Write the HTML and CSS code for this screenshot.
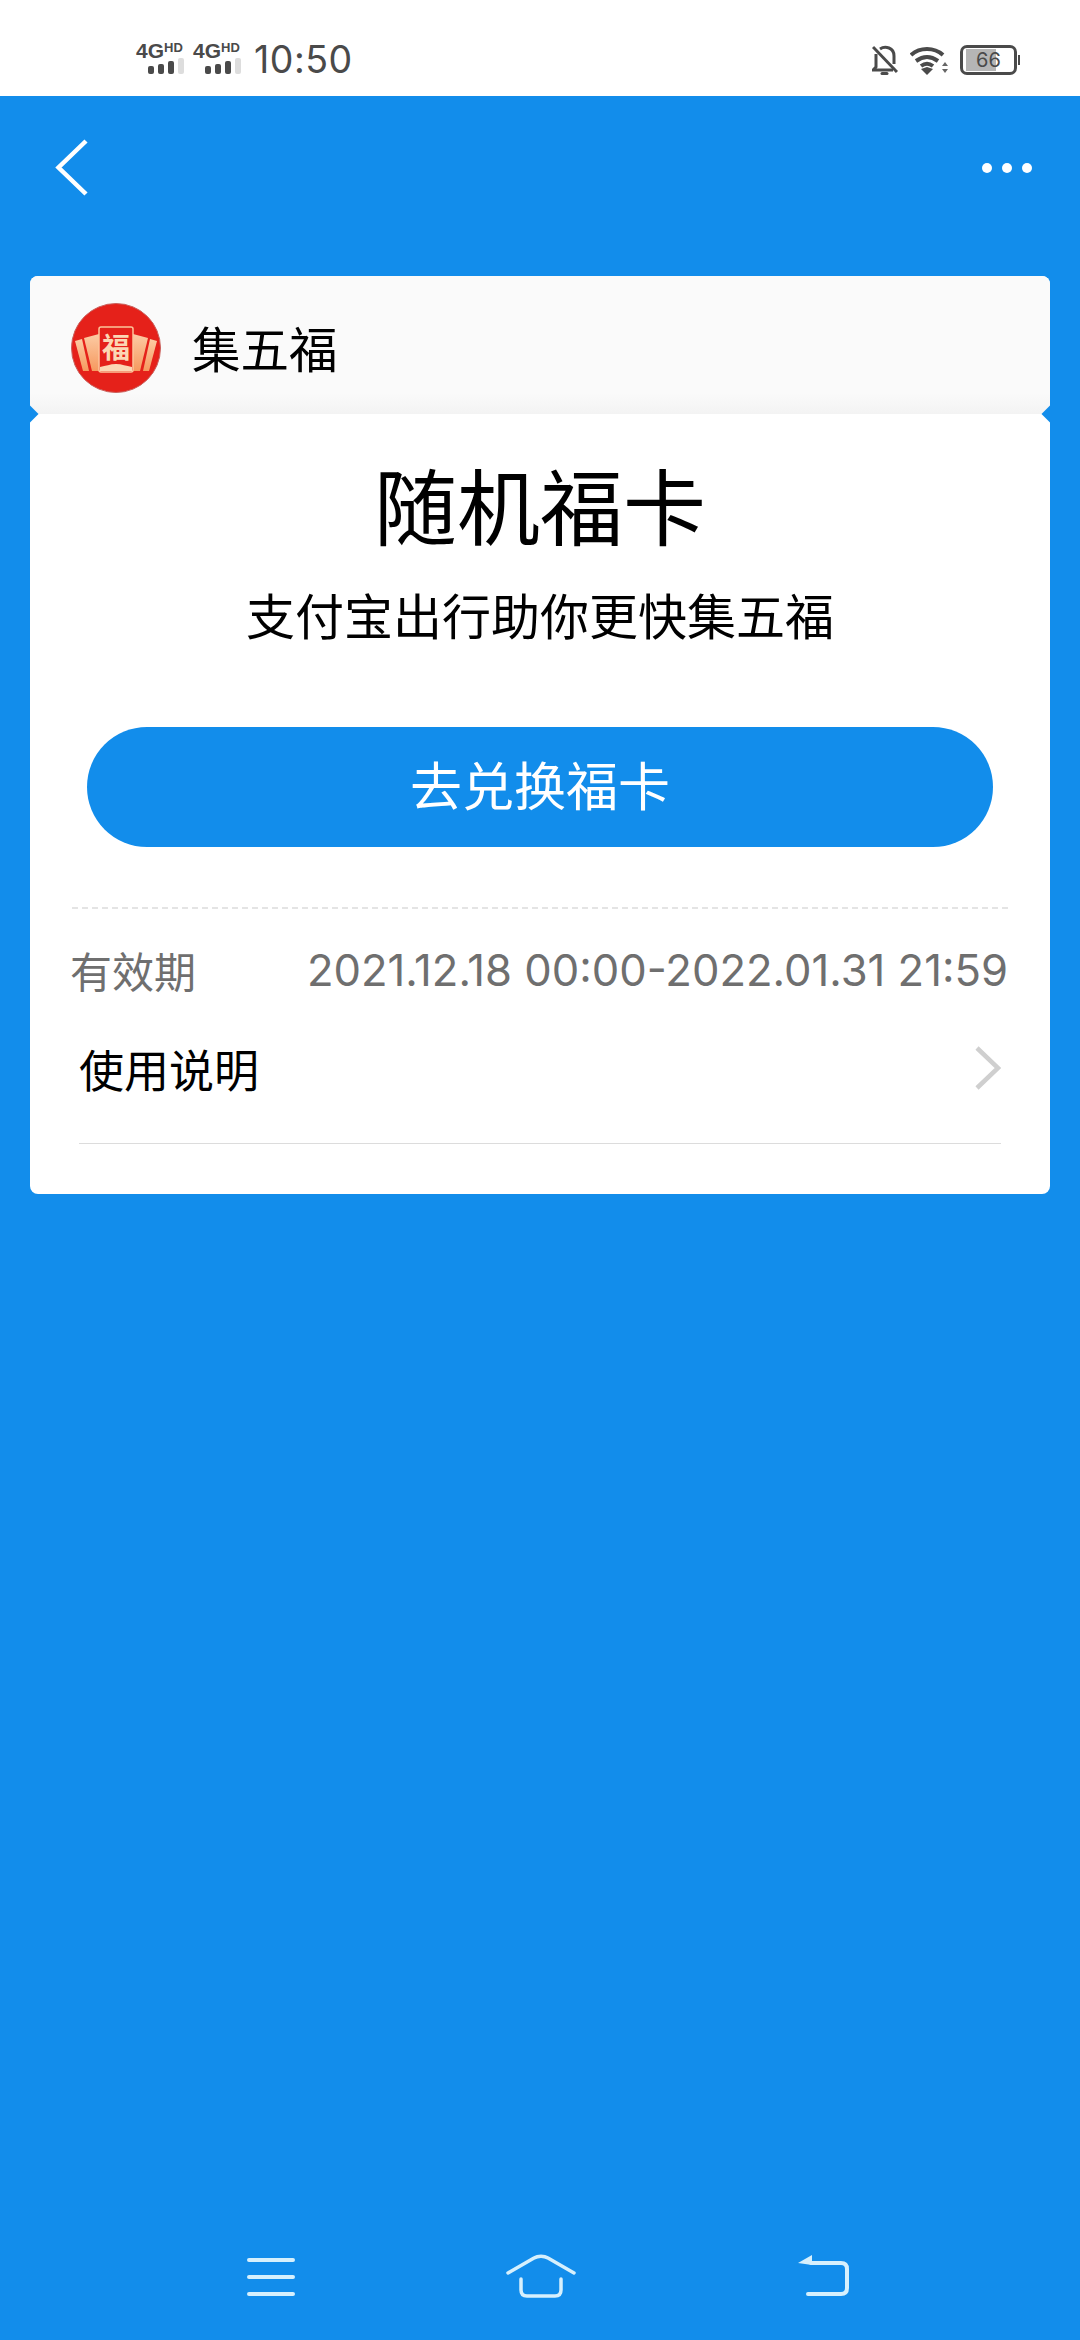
FILE: index.html
```html
<!DOCTYPE html>
<html lang="zh-CN">
<head>
    <meta charset="UTF-8">
    <meta name="viewport" content="width=device-width, initial-scale=1.0">
    <title>随机福卡</title>
    <link rel="stylesheet" href="styles.css">
</head>
<body>
    <div class="status-bar">
        <div class="status-left">
            <div class="signal">
                <div class="signal-label"><span class="net">4G</span><span class="hd">HD</span></div>
                <div class="bars"><i></i><i></i><i></i><i class="off"></i></div>
            </div>
            <div class="signal">
                <div class="signal-label"><span class="net">4G</span><span class="hd">HD</span></div>
                <div class="bars"><i></i><i></i><i></i><i class="off"></i></div>
            </div>
            <span class="clock">10:50</span>
        </div>
        <div class="status-right">
            <svg class="bell" width="26" height="30" viewBox="0 0 26 30" fill="none" stroke="#4a4a4a" stroke-width="3">
                <path d="M4 9v13l-3 3h20"/>
                <path d="M8 4c3-2 6-2 9-1 4 1.500 5 5 5 8v8"/>
                <path d="M1 2l24 25"/>
                <path d="M10 28.500h5" stroke-linecap="round"/>
            </svg>
            <svg class="wifi" width="39" height="29" viewBox="0 0 39 29" fill="none" stroke="#4a4a4a" stroke-width="4">
                <path d="M1 9c9-8 23-8 32 0"/>
                <path d="M6 15c7-5 15-5 22 0"/>
                <path d="M11 20c4-3 8-3 12 0"/>
                <path d="M11 23l6 6 6-6-6-2z" fill="#4a4a4a" stroke="none"/>
                <path d="M32 20l3-4 3 4z M32 23l3 4 3-4z" fill="#666" stroke="none"/>
            </svg>
            <div class="battery">
                <div class="battery-body">
                    <div class="battery-level"></div>
                    <span class="battery-num">66</span>
                </div>
                <div class="battery-tip"></div>
            </div>
        </div>
    </div>

    <div class="page">
        <div class="top-bar">
            <svg width="36" height="60" viewBox="0 0 36 60" fill="none" stroke="#fff" stroke-width="4.500">
                <path d="M34 3L6.500 29.500 34 56"/>
            </svg>
            <div class="more"><i></i><i></i><i></i></div>
        </div>

        <div class="card">
            <div class="card-head">
                <svg class="logo" width="92" height="92" viewBox="0 0 92 92">
                    <defs>
                        <linearGradient id="cardFill" x1="0" y1="0" x2="0" y2="1">
                            <stop offset="0" stop-color="#fccba4"/>
                            <stop offset="1" stop-color="#f6995f"/>
                        </linearGradient>
                    </defs>
                    <circle cx="45" cy="46" r="44.500" fill="#e5211a" stroke="#c9625e" stroke-width="1"/>
                    <path d="M4 39l7-2 7 32h-6z" fill="url(#cardFill)"/>
                    <path d="M13 36l15-4v37h-7z" fill="url(#cardFill)"/>
                    <path d="M86 39l-7-2-7 32h6z" fill="url(#cardFill)"/>
                    <path d="M77 36l-15-4v37h7z" fill="url(#cardFill)"/>
                    <rect x="28" y="25" width="34" height="45" rx="2" fill="#e5211a" stroke="#fcc59a" stroke-width="1.500"/>
                    <path d="M29 69v-4c6-1 10-3 16-3s10 2 16 3v4z" fill="#fcd7b4"/>
                    <text class="logo-char" x="45" y="56" text-anchor="middle">福</text>
                </svg>
                <span class="card-name">集五福</span>
            </div>
            <div class="card-body">
                <i class="notch notch-left"></i>
                <i class="notch notch-right"></i>
                <h1 class="title">随机福卡</h1>
                <p class="subtitle">支付宝出行助你更快集五福</p>
                <div class="btn">去兑换福卡</div>
                <div class="dashed"></div>
                <div class="validity">
                    <span class="validity-label">有效期</span>
                    <span class="validity-date">2021.12.18 00:00-2022.01.31 21:59</span>
                </div>
                <div class="usage">
                    <span>使用说明</span>
                    <svg width="26" height="44" viewBox="0 0 26 44" fill="none" stroke="#cfcfcf" stroke-width="4.500">
                        <path d="M2 2l21 20L2 42"/>
                    </svg>
                </div>
            </div>
        </div>

        <div class="nav-bar">
            <svg class="nav-menu" width="50" height="38" viewBox="0 0 50 38" fill="none" stroke="#d6f0fd" stroke-width="4" stroke-linecap="round">
                <path d="M3 2h44M3 19h44M3 36h44"/>
            </svg>
            <svg class="nav-home" width="72" height="46" viewBox="0 0 72 46" fill="none" stroke="#d6f0fd" stroke-width="3.500" stroke-linecap="round" stroke-linejoin="round">
                <path d="M3 19L29 4c4-2.500 10-2.500 14 0l26 15"/>
                <path d="M16 25v11c0 4 2 6 6 6h28c4 0 6-2 6-6V25"/>
            </svg>
            <svg class="nav-back" width="54" height="44" viewBox="0 0 54 44" fill="none" stroke="#d6f0fd" stroke-width="4" stroke-linecap="round">
                <path d="M11 40h33c4 0 6-2 6-6V15c0-4-2-6-6-6H14"/>
                <path d="M15 1v10L1 9z" fill="#d6f0fd" stroke="none"/>
            </svg>
        </div>
    </div>
</body>
</html>
```

FILE: styles.css
```css
* {
    box-sizing: border-box;
}
html, body {
    margin: 0;
    padding: 0;
}
body {
    width: 1080px;
    height: 2340px;
    font-family: "Inter", "Noto Sans CJK SC", sans-serif;
    background-color: #128deb;
    display: flex;
    flex-direction: column;
    overflow: hidden;
}

/* status bar */
.status-bar {
    height: 96px;
    background-color: #fff;
    display: flex;
    justify-content: space-between;
    align-items: center;
    padding: 20px 60px 0 136px;
    color: #4a4a4a;
}
.status-left, .status-right {
    display: flex;
    align-items: center;
}
.status-right {
    margin-top: 4px;
}
.signal {
    width: 57px;
}
.signal-label {
    display: flex;
    align-items: flex-start;
    height: 16px;
    font-family: "Liberation Sans", sans-serif;
    font-weight: 700;
    line-height: 17px;
}
.net {
    font-size: 21px;
}
.hd {
    font-size: 13px;
    line-height: 11px;
}
.bars {
    display: flex;
    gap: 4px;
    align-items: flex-end;
    height: 16px;
    padding-left: 12px;
}
.bars i {
    display: block;
    width: 6px;
    height: 8px;
    background-color: #4a4a4a;
    border-radius: 2px;
}
.bars i:nth-child(2) { height: 10px; }
.bars i:nth-child(3) { height: 13px; }
.bars i.off {
    height: 16px;
    background-color: #ddd;
}
.clock {
    font-size: 37.500px;
    margin-left: 4px;
    margin-top: 3px;
    letter-spacing: 0.5px;
}
.bell {
    margin-right: 12px;
}
.wifi {
    margin-right: 11px;
}
.battery {
    display: flex;
    align-items: center;
}
.battery-body {
    position: relative;
    width: 57px;
    height: 30px;
    border: 3px solid #4a4a4a;
    border-radius: 7px;
    padding: 1px 3px;
}
.battery-level {
    width: 30px;
    height: 100%;
    background-color: #b5b5b5;
}
.battery-num {
    position: absolute;
    left: 13px;
    top: 0;
    font-size: 20px;
    line-height: 24px;
}
.battery-tip {
    width: 2px;
    height: 10px;
    margin-left: 1px;
    background-color: #4a4a4a;
}

/* main */
.page {
    flex: 1;
    display: flex;
    flex-direction: column;
}
.top-bar {
    height: 180px;
    padding: 42px 48px 0 52px;
    display: flex;
    justify-content: space-between;
}
.more {
    display: flex;
    gap: 10px;
    padding-top: 25px;
}
.more i {
    display: block;
    width: 10px;
    height: 10px;
    border-radius: 50%;
    background-color: #fff;
}
.card {
    margin: 0 30px;
    height: 918px;
    background-color: #fff;
    border-radius: 8px;
    overflow: hidden;
}
.card-head {
    height: 138px;
    background: linear-gradient(#fafafa 85%, #f3f3f3);
    display: flex;
    align-items: center;
    padding: 6px 0 0 41px;
}
.logo {
    margin-right: 29px;
}
.logo-char {
    font-family: "Noto Sans CJK SC", sans-serif;
    font-size: 28px;
    font-weight: 700;
    fill: #fcd7b4;
}
.card-name {
    font-size: 48.500px;
    margin-top: -3px;
    color: #000;
}
.card-body {
    position: relative;
    display: flex;
    flex-direction: column;
    align-items: center;
    height: 780px;
}
.notch {
    position: absolute;
    top: -6px;
    width: 12px;
    height: 12px;
    background-color: #128deb;
    transform: rotate(45deg);
}
.notch-left { left: -6px; }
.notch-right { right: -6px; }
.title {
    margin: 36px 0 0 0;
    font-size: 83px;
    line-height: 118px;
    font-weight: 400;
    color: #000;
}
.subtitle {
    margin: 15px 0 0 0;
    font-size: 49px;
    line-height: 70px;
    color: #000;
}
.btn {
    width: 906px;
    height: 120px;
    margin-top: 74px;
    background-color: #128deb;
    border-radius: 60px;
    color: #fff;
    font-size: 52px;
    line-height: 122px;
    text-align: center;
}
.dashed {
    width: 936px;
    height: 2px;
    margin-top: 60px;
    background: repeating-linear-gradient(90deg, #e4e4e4 0, #e4e4e4 6px, transparent 6px, transparent 10px);
}
.validity {
    width: 936px;
    height: 80px;
    margin-top: 22px;
    display: flex;
    justify-content: space-between;
    align-items: center;
    color: #6f6f6f;
}
.validity-label {
    font-size: 42px;
    margin: -4px 0 0 -2px;
}
.validity-date {
    font-size: 43.600px;
    margin-top: -2px;
}
.usage {
    width: 922px;
    height: 133px;
    padding-bottom: 18px;
    border-bottom: 1px solid #dcdcdc;
    display: flex;
    justify-content: space-between;
    align-items: center;
    font-size: 45px;
    color: #000;
}

/* bottom nav */
.nav-bar {
    margin-top: auto;
    height: 96px;
    display: flex;
    align-items: flex-start;
    padding: 10px 0 0 246px;
}
.nav-menu {
    margin-top: 4px;
}
.nav-home {
    margin-left: 209px;
}
.nav-back {
    margin-left: 220px;
}
```
